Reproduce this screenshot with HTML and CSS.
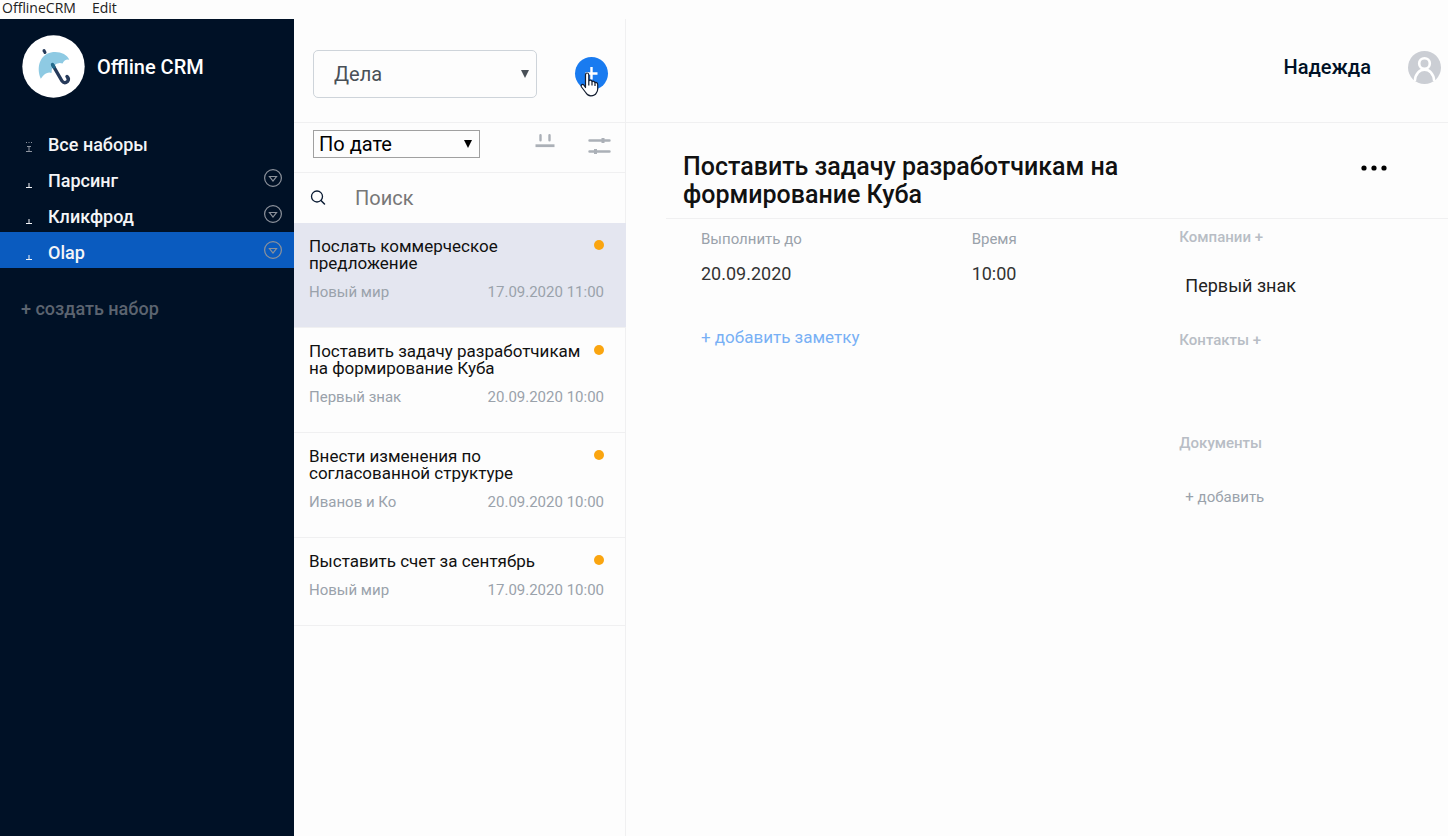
FILE: index.html
```html
<!DOCTYPE html>
<html lang="ru">
<head>
<meta charset="utf-8">
<meta name="viewport" content="width=device-width, initial-scale=1">
<title>Offline CRM</title>
<link rel="stylesheet" href="styles.css">
</head>
<body>
<div class="menubar">
  <button class="menubar-item" type="button">OfflineCRM</button>
  <button class="menubar-item" type="button">Edit</button>
</div>
<div class="app">
  <aside class="sidebar">
    <div class="brand">
      <svg class="brand-logo" viewBox="0 0 63 63" aria-hidden="true">
        <circle cx="31.5" cy="31.5" r="31.2" fill="#fff"/>
        <path d="M22 15.500l1 2" stroke="#263a5a" stroke-width="3" stroke-linecap="round"/>
        <path d="M18.800 43.800C14 32 18 20 29 17.500C37 16 45 19 47.300 24.800Q43 23.500 40.500 28.500Q36 26.500 31.500 31Q29 34 29.500 38Q24 36 18.800 43.800Z" fill="#8ecae3"/>
        <path d="M31 30.500L40 46Q42.500 49 45.500 46.500Q47.500 44 45 41.500" fill="none" stroke="#263a5a" stroke-width="3.400" stroke-linecap="round" stroke-linejoin="round"/>
        <path d="M30.500 29.500l1.400 2.400" stroke="#246b8c" stroke-width="3.400" stroke-linecap="round"/>
      </svg>
      <span class="brand-name">Offline CRM</span>
    </div>
    <nav class="sets">
      <a class="set" href="#">
        <svg class="set-icon dim" viewBox="0 0 8 10" aria-hidden="true"><path d="M1 .5h1M3.500 .5h1M6 .5h1M2 4.500h4M4 5v4M1 9.500h6" stroke="currentColor"/></svg>
        <span class="set-name">Все наборы</span>
      </a>
      <div class="set-row">
        <a class="set" href="#">
          <svg class="set-icon" viewBox="0 0 8 10" aria-hidden="true"><path d="M4 5v4M1 9.500h6" stroke="currentColor"/></svg>
          <span class="set-name">Парсинг</span>
        </a>
        <button class="set-more" type="button" aria-label="Меню набора Парсинг">
          <svg viewBox="0 0 18 18" aria-hidden="true"><circle cx="9" cy="9" r="8.400"/><path d="M5.500 7.500h7L9 12z"/></svg>
        </button>
      </div>
      <div class="set-row">
        <a class="set" href="#">
          <svg class="set-icon" viewBox="0 0 8 10" aria-hidden="true"><path d="M4 5v4M1 9.500h6" stroke="currentColor"/></svg>
          <span class="set-name">Кликфрод</span>
        </a>
        <button class="set-more" type="button" aria-label="Меню набора Кликфрод">
          <svg viewBox="0 0 18 18" aria-hidden="true"><circle cx="9" cy="9" r="8.400"/><path d="M5.500 7.500h7L9 12z"/></svg>
        </button>
      </div>
      <div class="set-row active">
        <a class="set" href="#" aria-current="page">
          <svg class="set-icon" viewBox="0 0 8 10" aria-hidden="true"><path d="M4 5v4M1 9.500h6" stroke="currentColor"/></svg>
          <span class="set-name">Olap</span>
        </a>
        <button class="set-more" type="button" aria-label="Меню набора Olap">
          <svg viewBox="0 0 18 18" aria-hidden="true"><circle cx="9" cy="9" r="8.400"/><path d="M5.500 7.500h7L9 12z"/></svg>
        </button>
      </div>
    </nav>
    <button class="create-set" type="button">+ создать набор</button>
  </aside>

  <section class="list">
    <div class="list-head">
      <span class="picker picker-kind">
        <select aria-label="Раздел"><option>Дела</option></select>
      </span>
      <span class="add">
        <button class="add-button" type="button" aria-label="Добавить">
          <svg viewBox="0 0 33 33" aria-hidden="true"><path d="M16.500 10v12.500M10.500 16.500h12" stroke="#fff" stroke-width="2.400"/></svg>
        </button>
        <svg class="cursor" viewBox="0 0 19 25" aria-hidden="true"><path d="M5.500 15.500V3Q5.500 1 7.100 1T8.800 3V9.500Q9 8 10.500 8.200T12 10Q12.400 9 13.700 9.300T15 11Q15.500 10.200 16.600 10.600T17.700 12.500V17Q17.700 19.500 16.300 21Q15 23.800 10.800 23.800Q7.500 23.800 5.700 20.500L1.500 15Q.6 13.300 2 12.600T4.500 14zM8.800 9v4.500M12 10v3.500M15 11v3" fill="#fff" stroke="#111b2e" stroke-width="1.200" stroke-linejoin="round"/></svg>
      </span>
    </div>
    <div class="list-tools">
      <span class="picker picker-sort">
        <select aria-label="Сортировка"><option>По дате</option></select>
      </span>
      <span class="tools">
        <button class="tool tool-group" type="button" aria-label="Группировка">
          <svg width="20" height="14" viewBox="0 0 20 14" aria-hidden="true"><path d="M5.500 1.200v5M14.500 1.200v5" stroke-width="2.400" stroke-linecap="round"/><path d="M.5 11.700h19" stroke-width="2.800"/></svg>
        </button>
        <button class="tool" type="button" aria-label="Фильтр">
          <svg width="23" height="18" viewBox="0 0 23 18" aria-hidden="true"><path d="M1.500 3.500h20M1.500 14.500h20" stroke-width="2.400" stroke-linecap="round"/><path d="M15 1v5M7.500 12v5" stroke-width="3"/></svg>
        </button>
      </span>
    </div>
    <label class="search">
      <svg width="16" height="16" viewBox="0 0 16 16" aria-hidden="true"><circle cx="7" cy="6.500" r="5.500" fill="none" stroke="#0a1b33" stroke-width="1.300"/><path d="M11 10.500l3.500 3.500" stroke="#0a1b33" stroke-width="1.500" stroke-linecap="round"/></svg>
      <input type="search" placeholder="Поиск" aria-label="Поиск">
    </label>
    <ul class="tasks">
      <li class="task selected">
        <div class="task-top"><h3 class="task-title">Послать коммерческое предложение</h3><i class="status"></i></div>
        <div class="task-meta"><span>Новый мир</span><time>17.09.2020 11:00</time></div>
      </li>
      <li class="task">
        <div class="task-top"><h3 class="task-title">Поставить задачу разработчикам на формирование Куба</h3><i class="status"></i></div>
        <div class="task-meta"><span>Первый знак</span><time>20.09.2020 10:00</time></div>
      </li>
      <li class="task">
        <div class="task-top"><h3 class="task-title">Внести изменения по согласованной структуре</h3><i class="status"></i></div>
        <div class="task-meta"><span>Иванов и Ко</span><time>20.09.2020 10:00</time></div>
      </li>
      <li class="task">
        <div class="task-top"><h3 class="task-title">Выставить счет за сентябрь</h3><i class="status"></i></div>
        <div class="task-meta"><span>Новый мир</span><time>17.09.2020 10:00</time></div>
      </li>
    </ul>
  </section>

  <main class="detail">
    <header class="user">
      <span class="user-name">Надежда</span>
      <svg class="avatar" viewBox="0 0 33 33" aria-hidden="true">
        <circle cx="16.500" cy="16.500" r="16.500" fill="#cbced4"/>
        <circle cx="16.500" cy="12.500" r="5.300" fill="none" stroke="#fff" stroke-width="2.600"/>
        <path d="M6.800 30C8 14.800 25 14.800 26.200 30" fill="none" stroke="#fff" stroke-width="2.600"/>
      </svg>
    </header>
    <article class="card">
      <div class="card-head">
        <h1 class="card-title">Поставить задачу разработчикам на формирование Куба</h1>
        <button class="card-more" type="button" aria-label="Ещё">
          <svg width="26" height="6" viewBox="0 0 26 6" aria-hidden="true"><circle cx="3" cy="3" r="2.600"/><circle cx="13" cy="3" r="2.600"/><circle cx="23" cy="3" r="2.600"/></svg>
        </button>
      </div>
      <div class="card-body">
        <div class="info">
          <dl class="field"><dt>Выполнить до</dt><dd>20.09.2020</dd></dl>
          <dl class="field"><dt>Время</dt><dd>10:00</dd></dl>
          <button class="add-note" type="button">+ добавить заметку</button>
        </div>
        <div class="links">
          <section class="link-group">
            <button class="link-title" type="button">Компании +</button>
            <a class="link-item" href="#">Первый знак</a>
          </section>
          <section class="link-group">
            <button class="link-title" type="button">Контакты +</button>
          </section>
          <section class="link-group">
            <h2 class="link-title">Документы</h2>
            <button class="link-add" type="button">+ добавить</button>
          </section>
        </div>
      </div>
    </article>
  </main>
</div>
</body>
</html>
```
FILE: styles.css
```css
* { box-sizing: border-box; }
body {
  margin: 0;
  min-height: 100vh;
  display: flex;
  flex-direction: column;
  background: #fdfdfd;
  color: #111;
  font-family: Roboto, "Liberation Sans", sans-serif;
}
button, select, input { font: inherit; color: inherit; }
button { padding: 0; border: 0; background: none; text-align: left; cursor: pointer; }
a { color: inherit; text-decoration: none; }
h1, h2, h3, ul, dl, dd { margin: 0; padding: 0; }
svg { display: block; }

.menubar {
  display: flex;
  gap: 16px;
  padding: 0 2px 3px;
  font: 14px/16px "Open Sans", "Noto Sans", sans-serif;
  color: #222;
}
.app { flex: 1; display: flex; }

/* Sidebar */
.sidebar { flex: 0 0 294px; background: #001126; color: #f4f5f7; }
.brand { display: flex; align-items: center; gap: 12px; padding: 16px 22px 26px; }
.brand-logo { width: 63px; height: 63px; }
.brand-name { font-size: 20px; font-weight: 500; color: #fff; }
.sets { display: flex; flex-direction: column; }
.set-row { display: flex; align-items: center; padding-right: 12px; }
.set-row.active { background: #0a5bbf; }
.set {
  flex: 1;
  display: flex;
  align-items: flex-end;
  gap: 15px;
  height: 36px;
  padding: 0 24px 3px 25px;
}
.sets { padding-top: 9px; }
.set-icon { width: 8px; height: 10px; margin-bottom: 5px; }
.set-icon.dim { color: #8d949f; }
.set-name { font-size: 18px; line-height: 24px; font-weight: 500; }
.set-more { width: 18px; height: 18px; }
.set-more svg { fill: none; stroke: #8c929b; stroke-width: 1.2; }
.create-set {
  margin: 29px 0 0 21px;
  font-size: 18px;
  line-height: 24px;
  font-weight: 500;
  color: #5c6470;
}

/* Task list */
.list { flex: 0 0 331px; border-right: 1px solid #f0f0f1; }
.list-head {
  display: flex;
  align-items: center;
  justify-content: space-between;
  height: 104px;
  padding: 6px 17px 0 19px;
  border-bottom: 1px solid #f0f0f1;
}
.picker { position: relative; display: block; }
.picker::after {
  content: "";
  position: absolute;
  top: 50%;
  right: 8px;
  margin-top: -4px;
  border: 4px solid transparent;
  border-top: 8px solid currentColor;
  border-bottom: 0;
  pointer-events: none;
}
.picker select { width: 100%; height: 100%; appearance: none; outline: 0; background: transparent; }
.picker-kind { width: 224px; height: 48px; color: #495057; font-size: 20px; }
.picker-kind select { padding: 0 20px; border: 1px solid #ced4da; border-radius: 5px; }
.picker-sort { width: 167px; height: 28px; color: #000; font-size: 20px; }
.picker-sort select { padding: 0 5px; border: 1px solid #a0a0a0; border-radius: 0; }
.add { position: relative; }
.add-button { display: block; width: 33px; height: 33px; border-radius: 50%; background: #197bf0; }
.cursor { position: absolute; left: 5px; top: 15px; width: 19px; height: 25px; pointer-events: none; }
.list-tools {
  display: flex;
  justify-content: space-between;
  height: 50px;
  padding: 7px 14px 0 19px;
  border-bottom: 1px solid #f0f0f1;
}
.tools { display: flex; gap: 33px; align-items: flex-start; padding-top: 4px; }
.tool svg { stroke: #abb0b7; fill: none; }
.tool + .tool { padding-top: 3px; }
.search { display: flex; align-items: center; gap: 29px; height: 50px; padding: 0 16px; }
.search input {
  flex: 1;
  min-width: 0;
  padding: 0;
  border: 0;
  outline: 0;
  background: none;
  font-size: 20px;
  appearance: none;
}
.search input::placeholder { color: #777; opacity: 1; }
.tasks { list-style: none; margin-right: -1px; }
.task { padding: 15px 22px 26px 15px; border-bottom: 1px solid #f0f0f1; }
.task.selected { background: #e4e6f0; }
.task-top { display: flex; justify-content: space-between; gap: 4px; margin-bottom: 11px; }
.task-title { font-size: 17px; line-height: 17px; font-weight: 400; color: #111; }
.status { flex: none; width: 10px; height: 10px; margin-top: 2px; border-radius: 50%; background: #faa510; }
.task-meta {
  display: flex;
  justify-content: space-between;
  font-size: 15px;
  line-height: 18px;
  color: #9aa2ab;
}

/* Detail */
.detail { flex: 1; min-width: 0; }
.user {
  display: flex;
  align-items: center;
  justify-content: flex-end;
  gap: 37px;
  height: 104px;
  padding: 0 7px 7px 0;
  border-bottom: 1px solid #f0f0f1;
}
.user-name { font-size: 20px; font-weight: 500; color: #001126; }
.avatar { width: 33px; height: 33px; }
.card { margin-left: 40px; }
.card-head {
  display: flex;
  justify-content: space-between;
  padding: 30px 61px 9px 17px;
  border-bottom: 1px solid #f0f0f1;
}
.card-title { max-width: 460px; font-size: 25px; line-height: 28px; font-weight: 500; color: #111; }
.card-more { align-self: flex-start; padding: 12px 0; }
.card-body { display: grid; grid-template-columns: 479fr 269fr; padding-left: 35px; }
.info { display: grid; grid-template-columns: 271fr 208fr; align-content: start; padding-top: 11px; }
.field dt { font-size: 15px; line-height: 18px; color: #9aa2ab; }
.field dd { margin-top: 15px; font-size: 18px; line-height: 22px; color: #333; }
.add-note { grid-column: 1 / -1; margin-top: 41px; font-size: 17px; line-height: 22px; color: #78b0f5; }
.links { display: flex; flex-direction: column; padding-top: 9px; }
.link-group { display: flex; flex-direction: column; align-items: flex-start; min-height: 103px; }
.link-title { font-size: 15px; line-height: 18px; font-weight: 500; color: #b8bdc5; }
.link-item { margin: 29px 6px 0; font-size: 18px; line-height: 22px; color: #222; }
.link-add { margin: 36px 6px 0; font-size: 15px; line-height: 18px; color: #9aa2ab; }
```
